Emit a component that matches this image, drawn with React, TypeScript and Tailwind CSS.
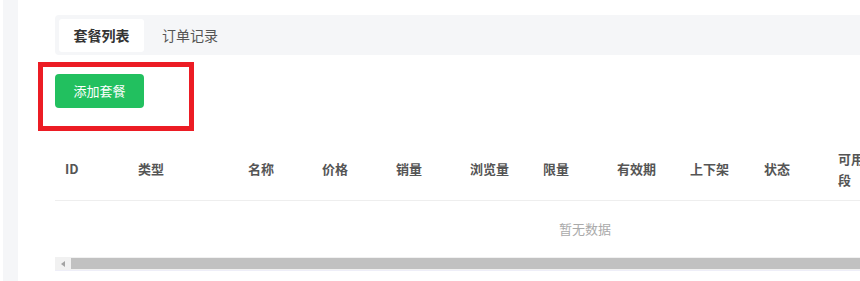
import React from 'react';

const COLUMNS = [
  { label: 'ID', width: 'w-[73px]' },
  { label: '类型', width: 'w-[110px]' },
  { label: '名称', width: 'w-[74px]' },
  { label: '价格', width: 'w-[74px]' },
  { label: '销量', width: 'w-[74px]' },
  { label: '浏览量', width: 'w-[73px]' },
  { label: '限量', width: 'w-[74px]' },
  { label: '有效期', width: 'w-[73px]' },
  { label: '上下架', width: 'w-[74px]' },
  { label: '状态', width: 'w-[74px]' },
  { label: '可用时段', width: 'w-[68px]' },
];

export default function App() {
  return (
    <div className="relative w-[860px] h-[281px] overflow-hidden bg-white flex font-['Noto_Sans_CJK_SC','Noto_Sans',sans-serif]">
      {/* left strip */}
      <div className="ml-[3px] w-[15px] shrink-0 bg-[#f5f6f8]" />

      <main className="pl-[37px] pt-[15px] shrink-0 w-[1000px]">
        {/* Tabs */}
        <div className="h-[40px] bg-[#f5f6f8] rounded-l-[4px] p-[4px] flex items-center">
          <div className="h-[33px] w-[85px] bg-white rounded-[3px] flex items-center justify-center text-[14px] font-bold text-[#333]">
            套餐列表
          </div>
          <div className="h-[33px] px-[18px] flex items-center text-[14px] text-[#555]">
            订单记录
          </div>
        </div>

        {/* Toolbar */}
        <div className="pt-[19px] h-[82px]">
          <button className="h-[34px] w-[89px] bg-[#22c05f] rounded-[4px] text-white text-[13px]">
            添加套餐
          </button>
        </div>

        {/* Table */}
        <div className="w-[900px]">
          <div className="flex items-center h-[64px] border-b border-[#eeeeee]">
            {COLUMNS.map(col => (
              <div key={col.label} className={`${col.width} shrink-0 pl-[10px] text-[13px] font-bold text-[#555] leading-[21px] break-all`}>
                {col.label === '可用时段' ? <span className="block w-[44px]">{col.label}</span> : col.label}
              </div>
            ))}
          </div>
          <div className="h-[56px] flex items-center">
            <span className="ml-[504px] text-[13px] text-[#aaa]">暂无数据</span>
          </div>
          {/* horizontal scrollbar */}
          <div className="h-[14px] flex bg-[#f1f1f1] border-b border-[#eeeef8]">
            <div className="w-[16px] flex items-center justify-center">
              <span className="w-0 h-0 border-y-[3px] border-y-transparent border-r-[4px] border-r-[#a3a3a3]" />
            </div>
            <div className="flex-1 bg-[#c1c1c1] mt-[1px] mb-[1px]" />
          </div>
        </div>
      </main>

      {/* annotation box */}
      <div className="absolute left-[38px] top-[62px] w-[156px] h-[69px] border-[5px] border-[#ec1c24]" />
    </div>
  );
}
